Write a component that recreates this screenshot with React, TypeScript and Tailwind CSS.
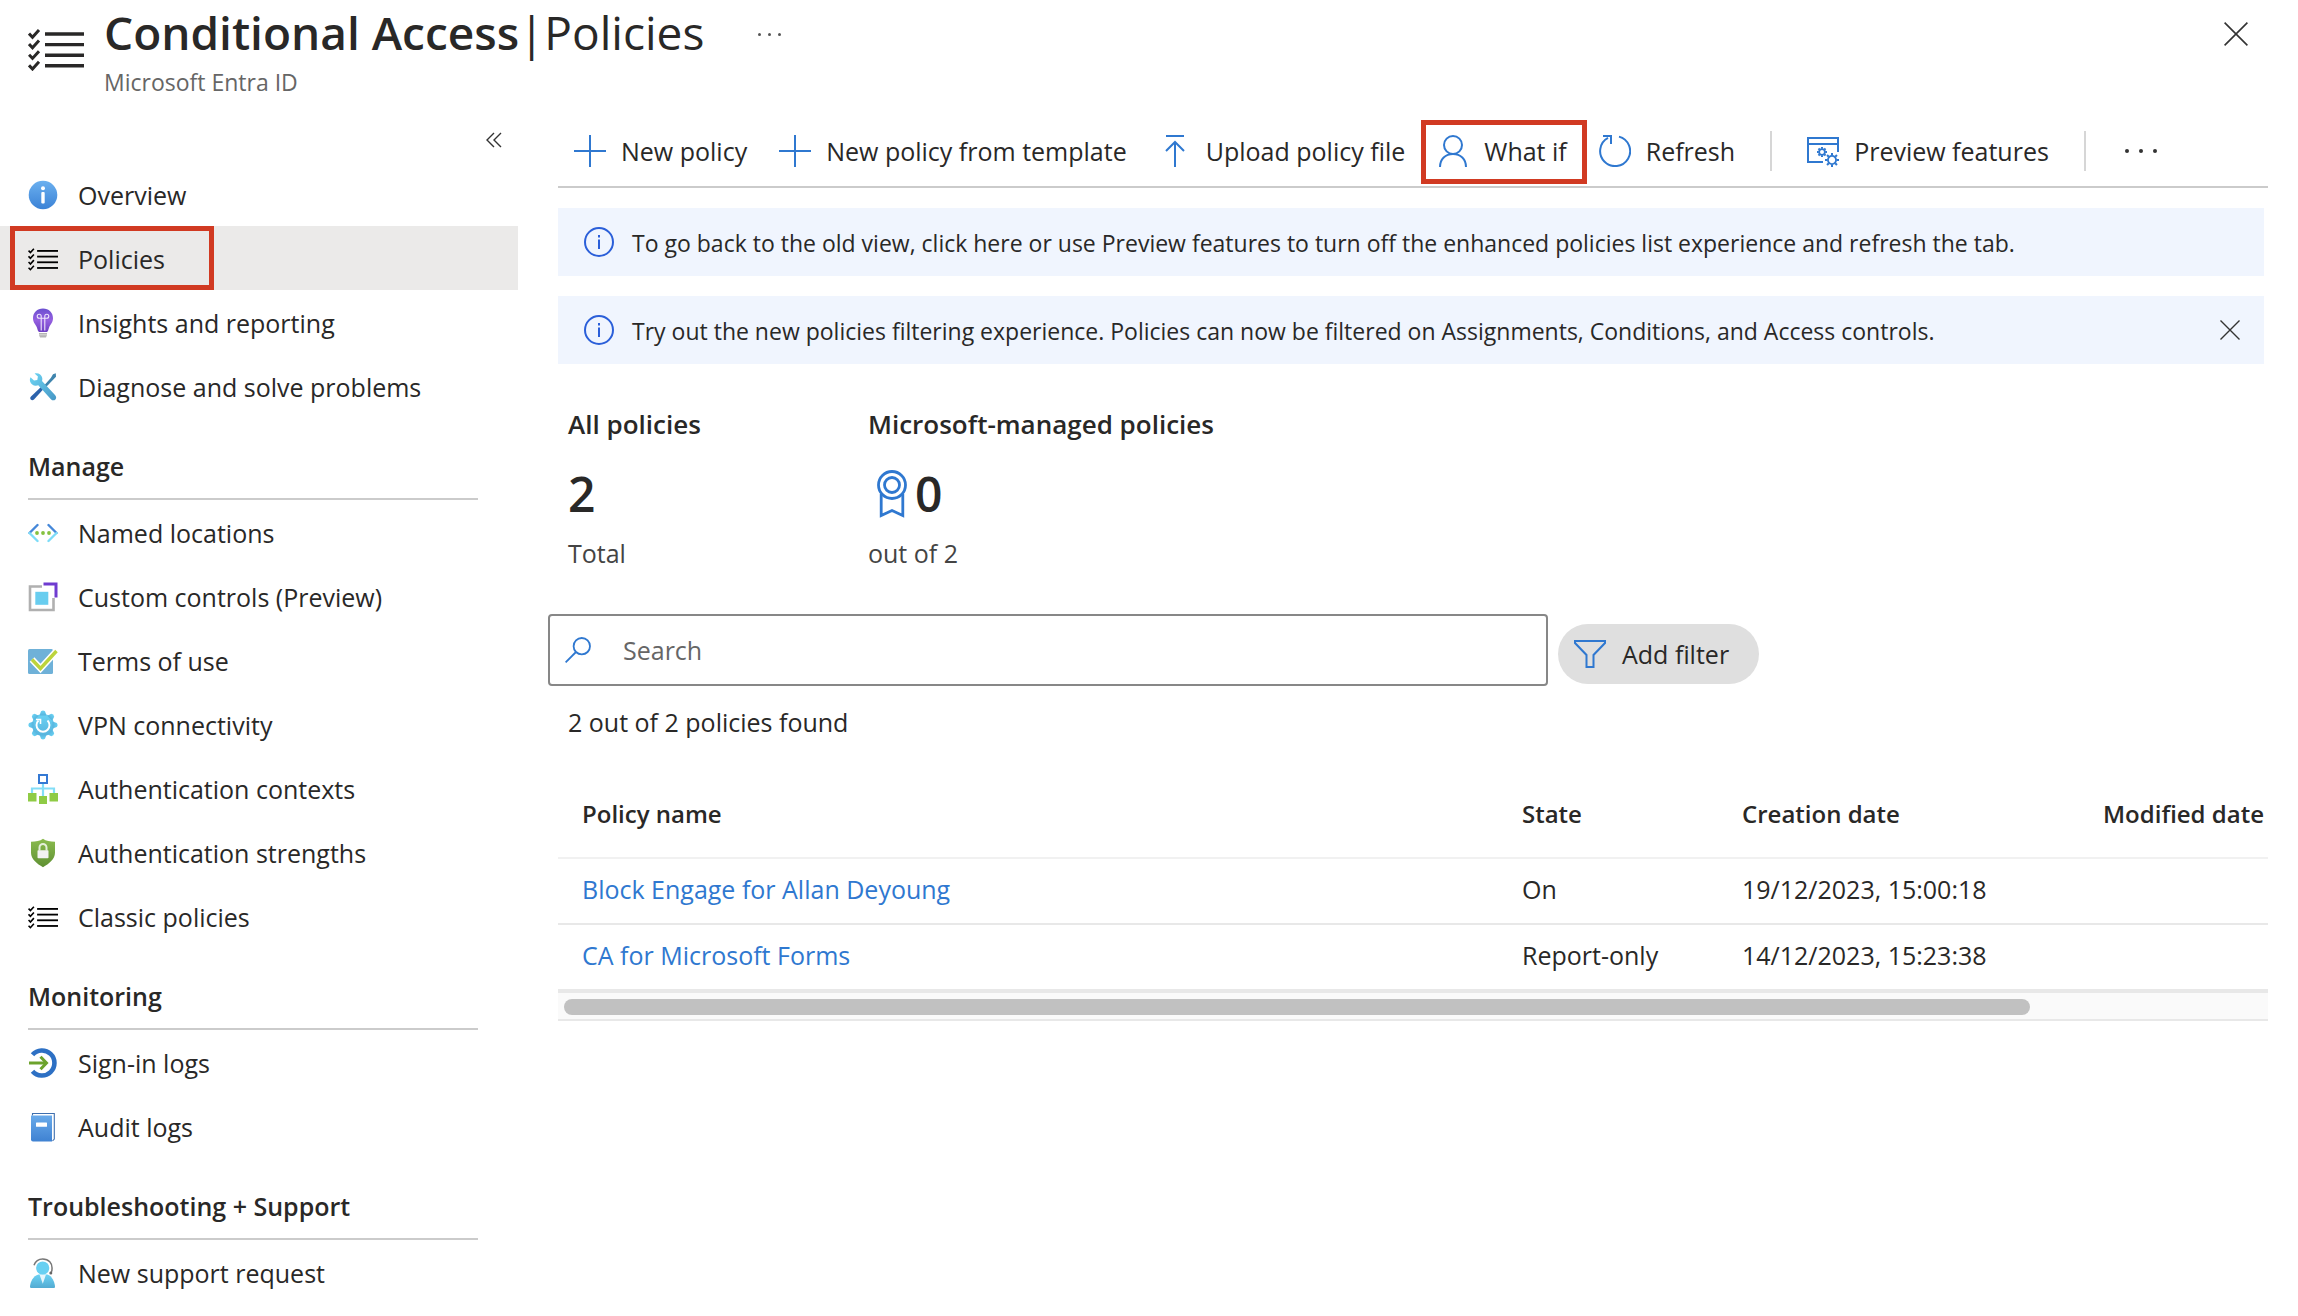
import React from "react";

type IconProps = { className?: string };

const Checklist = ({ className }: IconProps) => (
  <svg viewBox="0 0 56 42" className={className} fill="none" aria-hidden="true">
    {[0, 1, 2, 3].map((i) => (
      <g key={i} transform={`translate(0 ${i * 10.6})`}>
        <path d="M1 4.5 L4.5 8.2 L11 1" stroke="currentColor" strokeWidth="3" />
        <path d="M17 5 H56" stroke="currentColor" strokeWidth="3.4" />
      </g>
    ))}
  </svg>
);

const ListIcon = () => <Checklist className="h-[23px] w-[30px] text-black" />;

const InfoFilled = () => (
  <svg viewBox="0 0 30 30" className="size-[30px]" aria-hidden="true">
    <defs>
      <linearGradient id="info" x1="0" y1="0" x2="0" y2="1">
        <stop offset="0" stopColor="#6bb0ef" />
        <stop offset="1" stopColor="#3b82d6" />
      </linearGradient>
    </defs>
    <circle cx="15" cy="15" r="14.3" fill="url(#info)" />
    <circle cx="15" cy="8.3" r="2" fill="#fff" />
    <rect x="13.3" y="12" width="3.4" height="11.5" rx="1" fill="#fff" />
  </svg>
);

const Bulb = () => (
  <svg viewBox="0 0 30 30" className="size-[30px]" aria-hidden="true">
    <defs>
      <linearGradient id="bulb" x1="0" y1="0" x2="0" y2="1">
        <stop offset="0" stopColor="#6b4fd0" />
        <stop offset="0.5" stopColor="#9560e0" />
        <stop offset="1" stopColor="#6e40c4" />
      </linearGradient>
    </defs>
    <path d="M15 .6C9.2.6 5 4.8 5 10.2c0 4.4 2.6 6 3.9 9.2.7 1.7.7 3 1.6 4.1.3.4.7.5 1.200.5h6.600c.5 0 .9-.1 1.200-.5.9-1.100.9-2.400 1.600-4.100C22.400 16.200 25 14.600 25 10.200 25 4.800 20.800.600 15 .600z" fill="url(#bulb)" />
    <path d="M13.200 22.500V10.500M16.800 22.500V10.500M9.200 8.300a2 2 0 1 1 4 0v2h-2a2 2 0 0 1-2-2zM20.800 8.300a2 2 0 1 0-4 0v2h2a2 2 0 0 0 2-2zM13 10.300h4" stroke="#eee6fb" strokeWidth="1.100" fill="none" />
    <path d="M11 25h8v2l-1 2.500h-6L11 27z" fill="#b5b5b5" />
    <path d="M11 26.800h8" stroke="#e4e4e4" strokeWidth=".8" />
  </svg>
);

const Tools = () => (
  <svg viewBox="0 0 30 30" className="size-[30px]" aria-hidden="true">
    <defs>
      <linearGradient id="wrench" x1="0" y1="0" x2="1" y2="1">
        <stop offset="0" stopColor="#6fd6f5" />
        <stop offset="1" stopColor="#4596c4" />
      </linearGradient>
    </defs>
    <path d="M27.800 1.200 25 2.300l-2.200 3.700-6.500 7.300 1.800 1.800 6.800-7L28 4.800z" fill="#3f84ad" />
    <path d="M13.200 14.800 3 24.500c-1 1-1 2.200-.2 3.100s2 1 3.200 0l9.500-10.500z" fill="#2c62ab" />
    <path d="M2.500 5.300 6 8.600l3.300-.7.600-3.300L6.600 1.400c3.300-1 7 .8 7.600 4.300.2 1.500.1 2.500-.2 3.400l13 13.900c1.500 1.700 1.500 3.300.4 4.500-1.300 1.200-3 1.200-4.500-.3L10.300 13.300c-3.700 1.200-7.200-.3-8.200-3.800-.4-1.500-.2-3 .4-4.200z" fill="url(#wrench)" />
  </svg>
);

const Named = () => (
  <svg viewBox="0 0 30 30" className="size-[30px]" fill="none" strokeWidth="2.400" strokeLinecap="round" aria-hidden="true">
    <path d="M9.500 7 1.500 15" stroke="#4587d9" />
    <path d="M1.500 15l8 8" stroke="#7ddcf8" />
    <path d="M20.500 7l8 8" stroke="#4587d9" />
    <path d="M28.500 15l-8 8" stroke="#7ddcf8" />
    <g fill="#85c13f">
      <circle cx="9" cy="15" r="1.900" />
      <circle cx="15" cy="15" r="1.900" />
      <circle cx="21" cy="15" r="1.900" />
    </g>
  </svg>
);

const Custom = () => (
  <svg viewBox="0 0 30 30" className="size-[30px]" fill="none" aria-hidden="true">
    <path d="M14 4.500H2V28h23.500V16" stroke="#b0b0b0" strokeWidth="2.600" />
    <path d="M15.500 2H28v13.500" stroke="#6f3bd0" strokeWidth="3" />
    <rect x="7.300" y="9.800" width="13" height="13" fill="#68cdef" />
  </svg>
);

const Terms = () => (
  <svg viewBox="0 0 30 30" className="size-[30px]" fill="none" aria-hidden="true">
    <rect x="0" y="3" width="25" height="25" rx="1.500" fill="#6fb1d8" />
    <path d="M4 13.500l8.500 9L28.500 5" stroke="#fff" strokeWidth="6.500" />
    <path d="M4 13.500l8.500 9L28.500 5" stroke="#bcd43c" strokeWidth="3.400" />
  </svg>
);

const Vpn = () => (
  <svg viewBox="0 0 30 30" className="size-[30px]" fill="none" aria-hidden="true">
    <defs>
      <linearGradient id="gear" x1="0" y1="0" x2="0" y2="1">
        <stop offset="0" stopColor="#6ad3f4" />
        <stop offset="1" stopColor="#57b3dd" />
      </linearGradient>
    </defs>
    <g fill="url(#gear)">
      <circle cx="15" cy="15" r="11" />
      {[0, 45, 90, 135, 180, 225, 270, 315].map((a) => (
        <path key={a} d="M11.500 5.500 13 1.200Q15-.4 17 1.200L18.500 5.500z" transform={`rotate(${a} 15 15)`} />
      ))}
    </g>
    <path d="M10.500 10.500a6.500 6.500 0 1 0 9 0" stroke="#fff" strokeWidth="1.900" />
    <path d="M8 9.500h4.500V14" stroke="#fff" strokeWidth="1.600" />
  </svg>
);

const Contexts = () => (
  <svg viewBox="0 0 30 30" className="size-[30px]" fill="none" aria-hidden="true">
    <path d="M15 10v14M4 20v-5.500h22V20" stroke="#83def7" strokeWidth="2.200" />
    <rect x="11" y="1" width="8" height="8" fill="#fff" stroke="#3479d4" strokeWidth="2" />
    <g fill="#8fcb45">
      <rect x="0" y="19" width="8.500" height="8.500" />
      <rect x="11" y="22" width="8" height="8" />
      <rect x="21.500" y="19" width="8.500" height="8.500" />
    </g>
  </svg>
);

const Shield = () => (
  <svg viewBox="0 0 30 30" className="size-[30px]" fill="none" aria-hidden="true">
    <defs>
      <linearGradient id="shield" x1="0" y1="0" x2="0" y2="1">
        <stop offset="0" stopColor="#8abb4e" />
        <stop offset="1" stopColor="#5f9033" />
      </linearGradient>
    </defs>
    <path d="M15 .8c3 2.200 7 2.900 12 3v11c0 6.500-6 11-12 14.400C9 25.800 3 21.300 3 14.800v-11c5-.1 9-.8 12-3z" fill="url(#shield)" />
    <path d="M11.500 12.500v-3a3.500 3.500 0 0 1 7 0v3" stroke="#e4efd9" strokeWidth="2" />
    <rect x="9.500" y="12.300" width="11" height="8" rx=".8" fill="#f2f2f2" />
  </svg>
);

const SignIn = () => (
  <svg viewBox="0 0 30 30" className="size-[30px]" fill="none" aria-hidden="true">
    <path d="M4.500 6.800A12.500 12.500 0 1 1 4.500 23.200" stroke="#2d70c4" strokeWidth="4.600" />
    <path d="M1 15h16" stroke="#6ca32c" strokeWidth="3" />
    <path d="M12.500 8.700 18.500 15l-6 6.300" stroke="#6ca32c" strokeWidth="3" />
  </svg>
);

const Book = () => (
  <svg viewBox="0 0 30 30" className="size-[30px]" fill="none" aria-hidden="true">
    <defs>
      <linearGradient id="book" x1="0" y1="0" x2="0" y2="1">
        <stop offset="0" stopColor="#69aaea" />
        <stop offset="1" stopColor="#3f82d2" />
      </linearGradient>
    </defs>
    <path d="M4.500 3.500V1.500H26.300V27l-1.800 2" stroke="#3f6fae" strokeWidth="1.100" />
    <path d="M3 3.500h21v26H5a2 2 0 0 1-2-2z" fill="url(#book)" />
    <rect x="8" y="10.500" width="11" height="4.300" rx=".5" fill="#fff" />
  </svg>
);

const Support = () => (
  <svg viewBox="0 0 30 30" className="size-[30px]" fill="none" aria-hidden="true">
    <defs>
      <linearGradient id="person" x1="0" y1="0" x2="0" y2="1">
        <stop offset="0" stopColor="#6bd2f3" />
        <stop offset="1" stopColor="#53abd2" />
      </linearGradient>
    </defs>
    <path d="M10.500 16.500h9c4.500 1.500 7 7 7.500 12 0 1-.5 1.500-1.500 1.500h-22c-1 0-1.500-.5-1.500-1.500.5-5 3-10.500 8.500-12z" fill="url(#person)" />
    <path d="M11.500 16.500h6.500l-3.200 9.300z" fill="#e6f6fc" />
    <circle cx="14.700" cy="10" r="6.600" fill="#68d0f2" />
    <path d="M6 7.200C7.500 3 11 1 14.700 1c6 0 9.800 4.200 9.300 10 0 2-.3 3.300-1.500 4" stroke="#777" strokeWidth="1.500" />
    <circle cx="22.800" cy="15" r="1.500" fill="#666" />
  </svg>
);

const Plus = () => (
  <svg viewBox="0 0 32 32" className="size-8 text-[#2f78d0]" stroke="currentColor" strokeWidth="2" aria-hidden="true">
    <path d="M16 0v32M0 16h32" />
  </svg>
);

const Upload = () => (
  <svg viewBox="0 0 32 32" className="size-8 text-[#2f78d0]" stroke="currentColor" strokeWidth="2" fill="none" aria-hidden="true">
    <path d="M7 1h18M16 32V7M7 16l9-9 9 9" />
  </svg>
);

const User = () => (
  <svg viewBox="0 0 32 32" className="size-8 text-[#2f78d0]" stroke="currentColor" strokeWidth="2" fill="none" aria-hidden="true">
    <circle cx="16" cy="10" r="9" />
    <path d="M3 32c0-8 5.500-13 13-13s13 5 13 13" />
  </svg>
);

const Refresh = () => (
  <svg viewBox="0 0 32 32" className="size-8 text-[#2f78d0]" stroke="currentColor" strokeWidth="2" fill="none" aria-hidden="true">
    <path d="M20 1.600A15 15 0 1 1 9 2.900M4 1h8v8" />
  </svg>
);

const Cog = ({ x, y, r }: { x: number; y: number; r: number }) => (
  <g transform={`translate(${x} ${y})`}>
    <circle r={r * 0.58} fill="none" strokeWidth="1.800" />
    {[0, 45, 90, 135, 180, 225, 270, 315].map((a) => (
      <path key={a} d={`M0 ${-r * 0.65}V${-r}`} strokeWidth="2" transform={`rotate(${a})`} />
    ))}
  </g>
);

const Preview = () => (
  <svg viewBox="0 0 32 32" className="size-8 text-[#2f78d0]" stroke="currentColor" strokeWidth="2" fill="none" aria-hidden="true">
    <path d="M16 27H1V3h30v14M1 9h30" />
    <Cog x={15} y={17} r={5} />
    <Cog x={25} y={25} r={7} />
  </svg>
);

const InfoOutline = () => (
  <svg viewBox="0 0 30 30" className="size-[30px] shrink-0 text-[#2b5fd9]" stroke="currentColor" strokeWidth="2" fill="none" aria-hidden="true">
    <circle cx="15" cy="15" r="14" />
    <path d="M15 12.500v9.500M15 8v2.500" />
  </svg>
);

const Cross = ({ className }: IconProps) => (
  <svg viewBox="0 0 24 24" className={className} stroke="#333" strokeWidth="1.600" aria-hidden="true">
    <path d="M.6.6l22.800 22.800M23.400.6.6 23.400" />
  </svg>
);

const Medal = () => (
  <svg viewBox="0 0 30 48" className="h-12 w-[30px]" stroke="#2f78d0" strokeWidth="2.800" fill="none" aria-hidden="true">
    <circle cx="15" cy="15" r="13.500" />
    <circle cx="15" cy="15" r="7.500" />
    <path d="M4.200 24v21.500L15 40.500l10.800 5V24" />
  </svg>
);

const Magnifier = () => (
  <svg viewBox="0 0 26 26" className="size-[26px] shrink-0" stroke="#2f78d0" strokeWidth="1.800" fill="none" aria-hidden="true">
    <circle cx="16.800" cy="9.200" r="8.200" />
    <path d="M11 15 .6 25.400" />
  </svg>
);

const Funnel = () => (
  <svg viewBox="0 0 32 28" className="h-7 w-8" stroke="#2f78d0" strokeWidth="2" fill="none" aria-hidden="true">
    <path d="M1 1h30v2L19.500 15v12h-7V15L1 3z" />
  </svg>
);

type Item = { label: string; icon: React.ReactNode; current?: boolean };

const top: Item[] = [
  { label: "Overview", icon: <InfoFilled /> },
  { label: "Policies", icon: <ListIcon />, current: true },
  { label: "Insights and reporting", icon: <Bulb /> },
  { label: "Diagnose and solve problems", icon: <Tools /> },
];

const sections: { title: string; items: Item[] }[] = [
  {
    title: "Manage",
    items: [
      { label: "Named locations", icon: <Named /> },
      { label: "Custom controls (Preview)", icon: <Custom /> },
      { label: "Terms of use", icon: <Terms /> },
      { label: "VPN connectivity", icon: <Vpn /> },
      { label: "Authentication contexts", icon: <Contexts /> },
      { label: "Authentication strengths", icon: <Shield /> },
      { label: "Classic policies", icon: <ListIcon /> },
    ],
  },
  {
    title: "Monitoring",
    items: [
      { label: "Sign-in logs", icon: <SignIn /> },
      { label: "Audit logs", icon: <Book /> },
    ],
  },
  { title: "Troubleshooting + Support", items: [{ label: "New support request", icon: <Support /> }] },
];

const NavItem = ({ item }: { item: Item }) => (
  <li className={item.current ? "relative bg-[#ebeae9]" : "relative"}>
    <a
      href="#"
      aria-current={item.current ? "page" : undefined}
      className="flex h-16 items-center gap-5 pt-0.5 pl-7"
    >
      <span className="flex w-[30px] justify-center">{item.icon}</span>
      {item.label}
    </a>
    {item.current && (
      <span className="pointer-events-none absolute inset-y-0 left-2.5 w-[204px] border-5 border-[#d13a22]" />
    )}
  </li>
);

const Tool = ({ icon, label, marked }: { icon: React.ReactNode; label: string; marked?: boolean }) => (
  <button type="button" className="relative flex h-16 items-center gap-[15px] px-4">
    {icon}
    <span>{label}</span>
    {marked && (
      <span className="pointer-events-none absolute -right-1 top-px bottom-[-1px] left-0 border-5 border-[#d13a22]" />
    )}
  </button>
);

const Divider = () => <span className="mx-[19px] h-10 w-0.5 bg-[#d6d6d6]" />;

const rows = [
  { name: "Block Engage for Allan Deyoung", state: "On", created: "19/12/2023, 15:00:18" },
  { name: "CA for Microsoft Forms", state: "Report-only", created: "14/12/2023, 15:23:38" },
];

export default function App() {
  return (
    <div className="min-h-screen overflow-hidden bg-white font-['Open_Sans',sans-serif] text-[25px] leading-8 whitespace-nowrap text-[#292827]">
      <header className="flex h-[116px] items-start pr-[50px] pl-7">
        <Checklist className="mt-[29px] h-[42px] w-14 text-[#292827]" />
        <div className="ml-5">
          <h1 className="flex text-[46px] leading-16">
            <span className="font-semibold">Conditional Access</span>
            <span>|</span>
            <span>Policies</span>
          </h1>
          <p className="mt-0.5 text-[23px] leading-8 text-[#666]">Microsoft Entra ID</p>
        </div>
        <button type="button" aria-label="More" className="mt-[33px] ml-[54px] flex gap-[7px]">
          <span className="size-[3px] rounded-full bg-[#555]" />
          <span className="size-[3px] rounded-full bg-[#555]" />
          <span className="size-[3px] rounded-full bg-[#555]" />
        </button>
        <button type="button" aria-label="Close" className="mt-[22px] ml-auto">
          <Cross className="size-6" />
        </button>
      </header>

      <div className="flex">
        <nav className="w-[518px] shrink-0" aria-label="Conditional Access">
          <div className="flex h-[46px] items-start justify-end pt-4 pr-4">
            <button type="button" aria-label="Collapse menu">
              <svg viewBox="0 0 16 16" className="size-4" fill="none" stroke="#333" strokeWidth="1.400" aria-hidden="true">
                <path d="M8 1 1 8l7 7M15 1 8 8l7 7" />
              </svg>
            </button>
          </div>
          <ul>
            {top.map((i) => (
              <NavItem key={i.label} item={i} />
            ))}
          </ul>
          {sections.map((s) => (
            <section key={s.title}>
              <h2 className="mr-10 ml-7 flex h-[82px] items-end border-b-2 border-[#cbcbcb] pb-4 font-semibold">
                {s.title}
              </h2>
              <ul>
                {s.items.map((i) => (
                  <NavItem key={i.label} item={i} />
                ))}
              </ul>
            </section>
          ))}
        </nav>

        <main className="min-w-0 flex-1 pr-[30px] pl-[30px]">
          <div className="ml-2.5">
            <div className="flex h-[72px] items-center border-b-2 border-[#cbcbcb]">
              <Tool icon={<Plus />} label="New policy" />
              <Tool icon={<Plus />} label="New policy from template" />
              <Tool icon={<Upload />} label="Upload policy file" />
              <Tool icon={<User />} label="What if" marked />
              <Tool icon={<Refresh />} label="Refresh" />
              <Divider />
              <Tool icon={<Preview />} label="Preview features" />
              <Divider />
              <button type="button" aria-label="More commands" className="ml-5 flex gap-2.5">
                <span className="size-1 rounded-full bg-[#333]" />
                <span className="size-1 rounded-full bg-[#333]" />
                <span className="size-1 rounded-full bg-[#333]" />
              </button>
            </div>

            <div className="mt-5 mr-1 flex h-[68px] items-center gap-[18px] bg-[#f0f5fe] px-[26px] text-[23px]">
              <InfoOutline />
              <p className="pt-0.5">
                To go back to the old view, click here or use Preview features to turn off the enhanced policies list
                experience and refresh the tab.
              </p>
            </div>
            <div className="mt-5 mr-1 flex h-[68px] items-center gap-[18px] bg-[#f0f5fe] pr-6 pl-[26px] text-[23px]">
              <InfoOutline />
              <p className="pt-0.5">
                Try out the new policies filtering experience. Policies can now be filtered on Assignments, Conditions,
                and Access controls.
              </p>
              <button type="button" aria-label="Dismiss" className="ml-auto">
                <Cross className="size-5" />
              </button>
            </div>

            <div className="mt-11 flex pl-2.5">
              <div className="w-[300px]">
                <h3 className="text-[26px] font-semibold">All policies</h3>
                <div className="mt-[18px] flex h-[72px] items-center text-[48px] font-semibold">2</div>
                <p className="mt-[7px] text-[#444]">Total</p>
              </div>
              <div>
                <h3 className="text-[26px] font-semibold">Microsoft-managed policies</h3>
                <div className="mt-[18px] flex h-[72px] items-center gap-2 pl-[9px] text-[48px] font-semibold">
                  <Medal />0
                </div>
                <p className="mt-[7px] text-[#444]">out of 2</p>
              </div>
            </div>
          </div>

          <div className="mt-[45px] flex items-center">
            <label className="flex h-[72px] w-[1000px] items-center gap-8 rounded-[4px] border-2 border-[#878787] px-[15px]">
              <Magnifier />
              <input
                type="search"
                aria-label="Search"
                placeholder="Search"
                className="min-w-0 flex-1 outline-none placeholder:text-[#666]"
              />
            </label>
            <button type="button" className="mt-2 ml-2.5 flex h-[60px] items-center gap-4 rounded-full bg-[#dfdfdf] pr-[30px] pl-4">
              <Funnel />
              Add filter
            </button>
          </div>

          <div className="ml-2.5">
            <p className="mt-5 pl-2.5">2 out of 2 policies found</p>
            <div className="mt-[33px] overflow-hidden">
              <table className="w-full table-fixed text-left">
                <colgroup>
                  <col />
                  <col className="w-[220px]" />
                  <col className="w-[361px]" />
                  <col className="w-[189px]" />
                </colgroup>
                <thead>
                  <tr className="h-[87px] border-b-2 border-[#f1f1f1] text-[24px]">
                    {["Policy name", "State", "Creation date", "Modified date"].map((h) => (
                      <th key={h} scope="col" className="pl-6 font-semibold">
                        {h}
                      </th>
                    ))}
                  </tr>
                </thead>
                <tbody>
                  {rows.map((r) => (
                    <tr key={r.name} className="h-[66px] border-b-2 border-[#e8e8e8]">
                      <td className="pb-1 pl-6">
                        <a href="#" className="text-[#2f78d0]">
                          {r.name}
                        </a>
                      </td>
                      <td className="pb-1 pl-6">{r.state}</td>
                      <td className="pb-1 pl-6">{r.created}</td>
                      <td />
                    </tr>
                  ))}
                </tbody>
              </table>
              <div className="border-y-2 border-[#e8e8e8] bg-[#fafafa] px-1.5 pt-1.5 pb-1">
                <div className="mr-[232px] h-4 rounded-full bg-[#c1c1c1]" />
              </div>
            </div>
          </div>
        </main>
      </div>
    </div>
  );
}
